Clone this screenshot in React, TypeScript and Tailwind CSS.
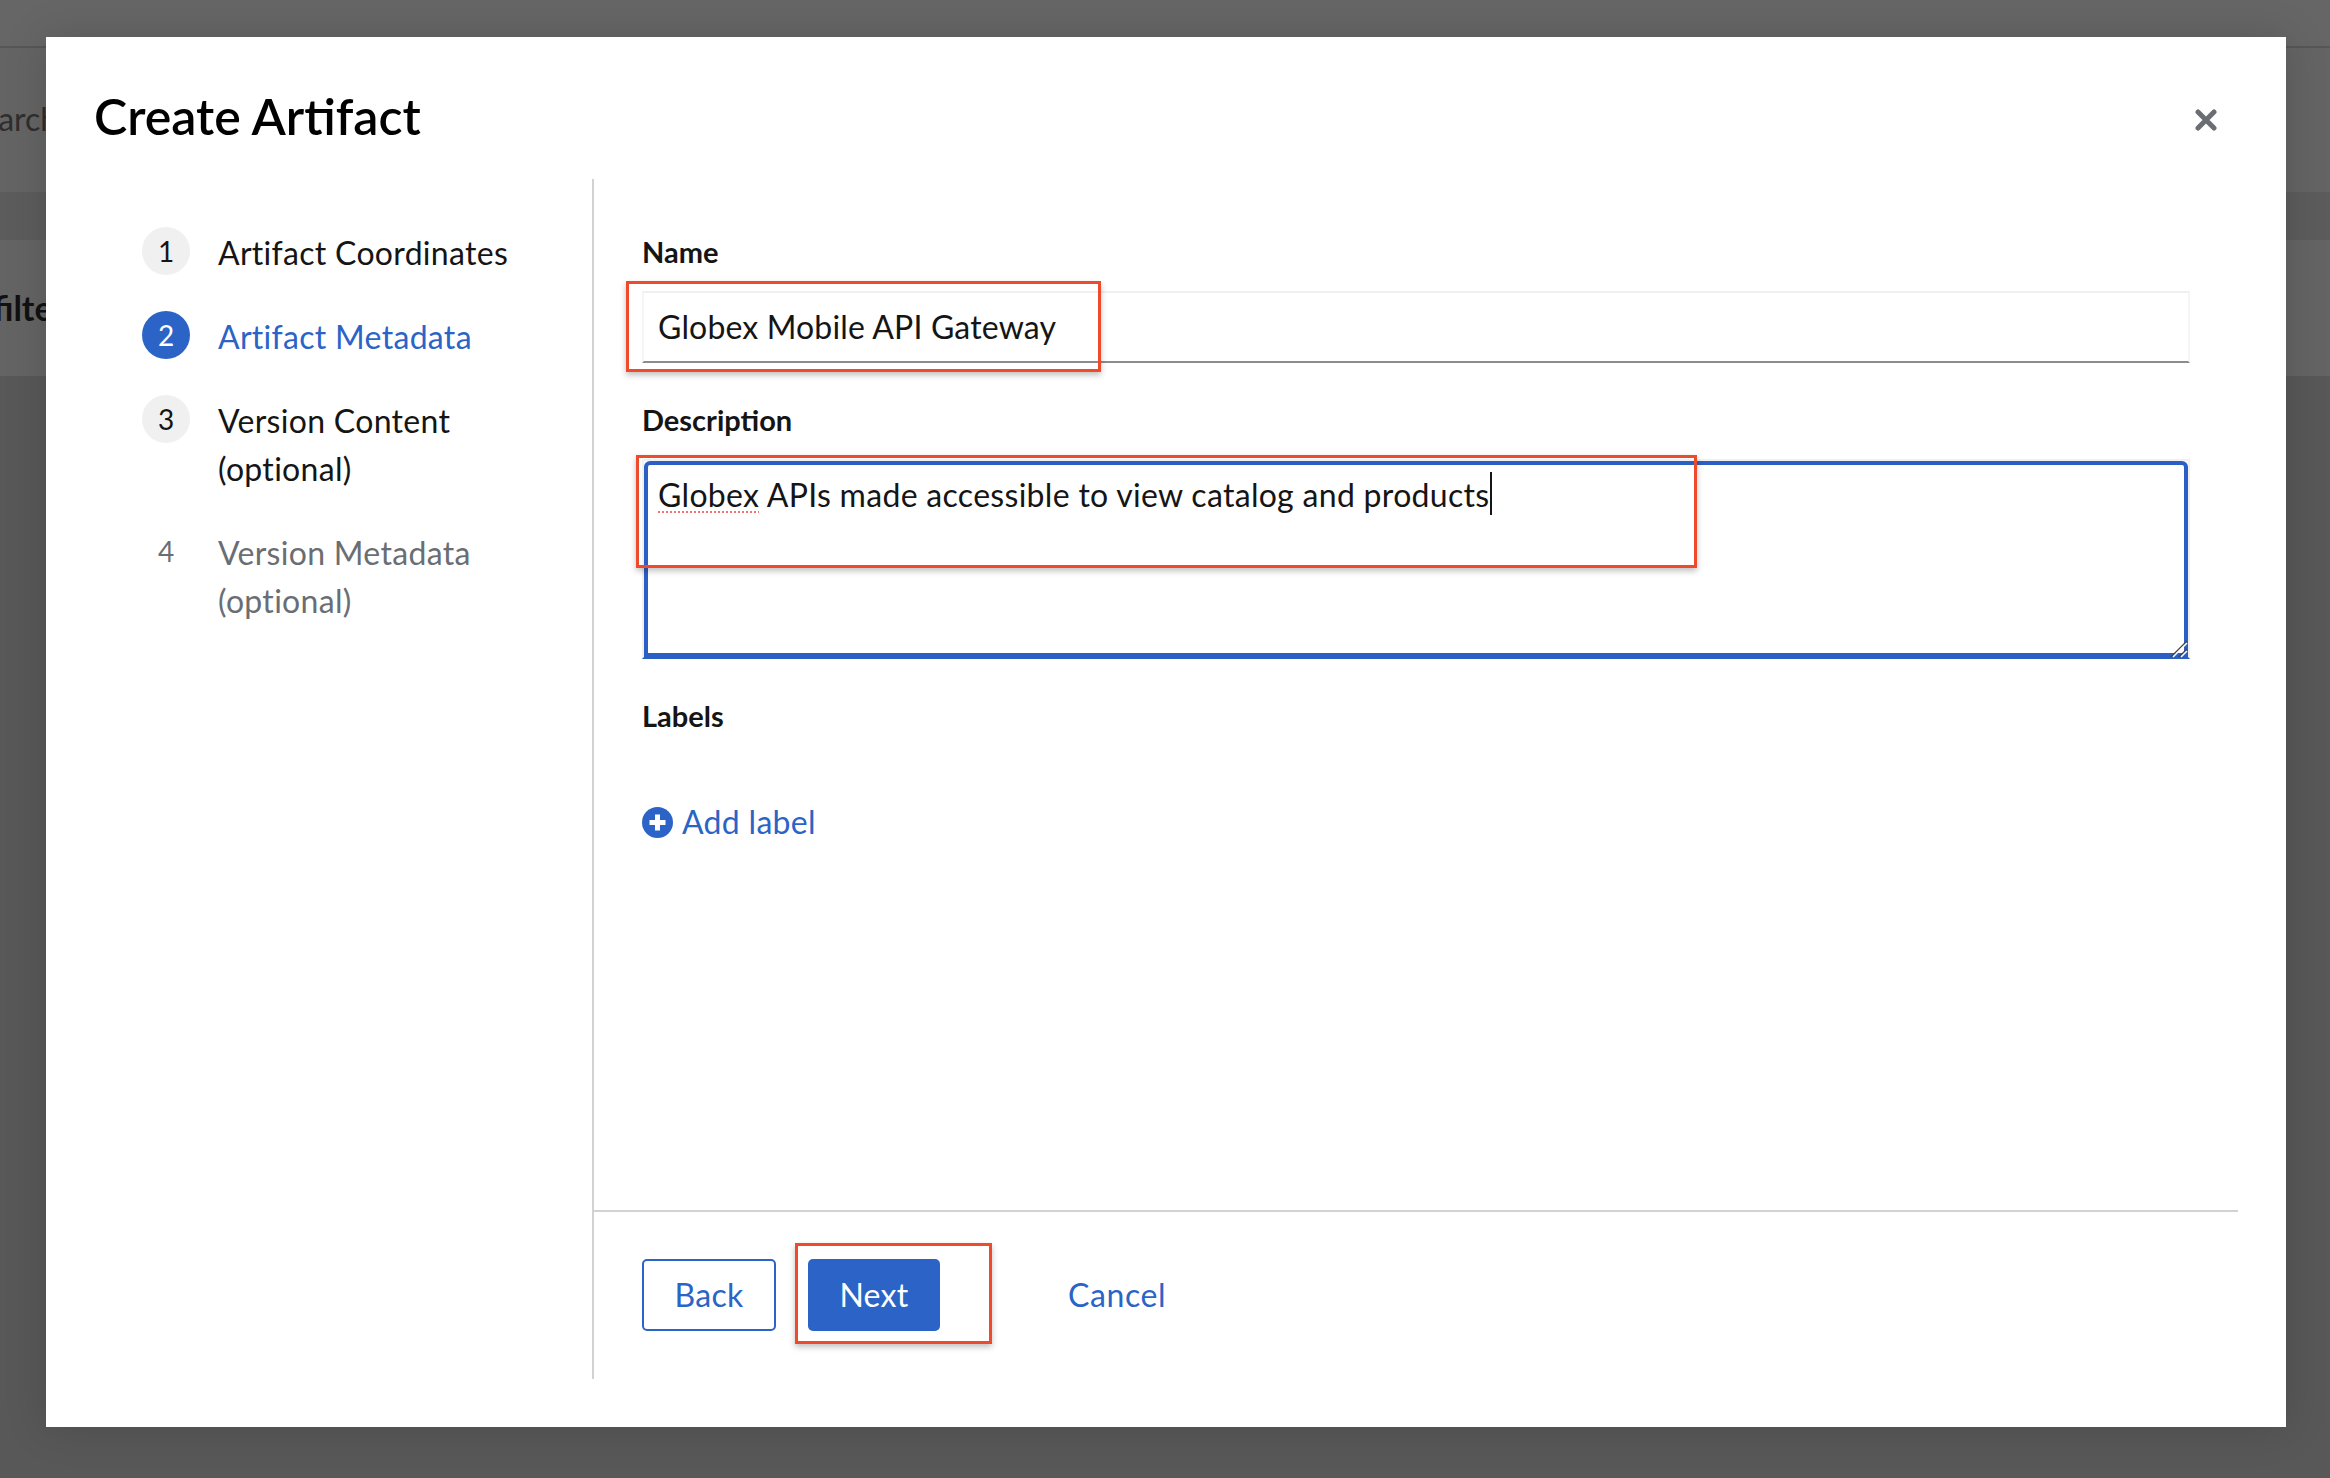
const steps = [
  { n: "1", label: ["Artifact Coordinates"], state: "done" },
  { n: "2", label: ["Artifact Metadata"], state: "current" },
  { n: "3", label: ["Version Content", "(optional)"], state: "done" },
  { n: "4", label: ["Version Metadata", "(optional)"], state: "disabled" },
];

function Step({ n, label, state }: { n: string; label: string[]; state: string }) {
  const circle =
    state === "current"
      ? "bg-[#2b64c6] text-white"
      : state === "disabled"
      ? "text-[#6a6e73]"
      : "bg-[#f0f0f0] text-[#151515]";
  const text =
    state === "current"
      ? "text-[#2b64c6]"
      : state === "disabled"
      ? "text-[#6a6e73]"
      : "text-[#151515]";
  return (
    <div className="flex items-start gap-[28px]">
      <div className={`flex h-[48px] w-[48px] shrink-0 items-center justify-center rounded-full text-[28px] ${circle}`}>
        {n}
      </div>
      <div className={`mb-[-2px] pt-[2px] text-[32px] leading-[48px] tracking-[0.3px] ${text}`}>
        {label.map((l) => (
          <div key={l}>{l}</div>
        ))}
      </div>
    </div>
  );
}

function Annotation({ className }: { className: string }) {
  return (
    <div className={`pointer-events-none absolute border-[3px] border-[#ee4a2c] shadow-[0_3px_6px_rgba(0,0,0,0.25)] ${className}`} />
  );
}

export default function App() {
  return (
    <div className="relative h-[1478px] w-[2330px] overflow-hidden bg-[#585858] font-['Lato','Liberation_Sans',sans-serif]">
      {/* page behind the backdrop */}
      <div className="h-[46px] bg-[#666666]" />
      <div className="h-[2px] bg-[#565656]" />
      <div className="flex h-[144px] items-center whitespace-nowrap bg-[#646464] pb-[2px]">
        <span className="ml-[-36px] text-[32px] text-[#2e2e2e]">Search</span>
      </div>
      <div className="h-[48px] bg-[#5c5c5c]" />
      <div className="flex h-[136px] items-center whitespace-nowrap bg-[#646464] pb-[2px]">
        <span className="ml-[-7px] text-[34px] font-bold text-[#111111]">filter</span>
      </div>

      {/* modal */}
      <div className="absolute left-[46px] top-[37px] flex h-[1390px] w-[2240px] flex-col bg-white text-[#151515] shadow-[0_0_40px_rgba(0,0,0,0.15)]">
        <div className="relative h-[142px] shrink-0 pl-[48px] pt-[50px]">
          <h1 className="text-[50px] font-semibold leading-[58px] text-[#000000]">Create Artifact</h1>
          <svg
            className="absolute left-[2149px] top-[72px] h-[22px] w-[22px]"
            viewBox="0 0 22 22"
            fill="none"
            stroke="#6a6e73"
            strokeWidth="5"
            strokeLinecap="round"
          >
            <path d="M3 3 19 19M19 3 3 19" />
          </svg>
        </div>

        <div className="flex min-h-0 flex-1 pb-[48px] pr-[48px]">
          <nav className="flex w-[548px] shrink-0 flex-col gap-[36px] border-r-2 border-[#d2d2d2] pl-[96px] pt-[48px]">
            {steps.map((s) => (
              <Step key={s.n} n={s.n} label={s.label} state={s.state} />
            ))}
          </nav>

          <div className="flex min-w-0 flex-1 flex-col">
            <div className="flex flex-1 flex-col px-[48px] pt-[57px]">
              <label className="text-[29px] font-bold leading-[32px]">Name</label>
              <div className="mt-[23px] flex h-[72px] items-center border-x-2 border-b-2 border-t-2 border-x-[#f5f5f5] border-b-[#8a8d90] border-t-[#f0f0f0] pl-[14px] text-[32px] tracking-[0.15px]">
                Globex Mobile API Gateway
              </div>

              <label className="mt-[41px] text-[29px] font-bold leading-[32px]">Description</label>
              <div className="mt-[23px] h-[200px] border-x-2 border-b-2 border-t-2 border-x-[#f0f0f0] border-b-[#2b5fc4] border-t-[#f0f0f0]">
                <div className="relative h-full rounded-t-[6px] border-x-[4px] border-b-[4px] border-t-[4px] border-[#2b5fc4] pl-[10px] pt-[6px] text-[32px] leading-[48px] tracking-[0.3px]">
                  <span className="underline decoration-[#f87171] decoration-dotted decoration-2 underline-offset-4">Globex</span>{" "}
                  APIs made accessible to view catalog and products
                  <span className="ml-px mt-[1px] inline-block h-[43px] w-[2px] bg-[#151515] align-top" />
                  <svg className="absolute bottom-[-5px] right-[-4px] h-[18px] w-[18px]" viewBox="0 0 18 18" fill="none" strokeWidth="1.5">
                    <path d="M1 17 17 1M9 17 17 9" stroke="#444444" />
                    <path d="M3 17 17 3M11 17 17 11" stroke="#ffffff" />
                  </svg>
                </div>
              </div>

              <label className="mt-[41px] text-[29px] font-bold leading-[32px]">Labels</label>
              <button className="mt-[74px] flex h-[32px] items-center gap-[9px] self-start text-[32px] tracking-[0.3px] text-[#2b64c6]">
                <svg className="h-[31px] w-[31px]" viewBox="0 0 31 31">
                  <circle cx="15.5" cy="15.5" r="15.5" fill="#2b64c6" />
                  <path d="M15.5 7.5v16M7.5 15.5h16" stroke="#fff" strokeWidth="5" />
                </svg>
                Add label
              </button>
            </div>

            <div className="flex h-[169px] shrink-0 items-start gap-[32px] border-t-2 border-[#d2d2d2] pl-[48px] pt-[47px]">
              <button className="h-[72px] w-[134px] rounded-[5px] border-2 border-[#2b64c6] text-[32px] tracking-[0.3px] text-[#2b64c6]">Back</button>
              <button className="h-[72px] w-[132px] rounded-[5px] bg-[#2b64c6] text-[32px] tracking-[0.3px] text-white">Next</button>
              <button className="ml-[96px] h-[72px] text-[32px] tracking-[0.6px] text-[#2b64c6]">Cancel</button>
            </div>
          </div>
        </div>
      </div>

      {/* red callouts drawn over the screenshot */}
      <Annotation className="left-[626px] top-[281px] h-[91px] w-[475px]" />
      <Annotation className="left-[636px] top-[455px] h-[113px] w-[1061px]" />
      <Annotation className="left-[795px] top-[1243px] h-[101px] w-[197px]" />
    </div>
  );
}
